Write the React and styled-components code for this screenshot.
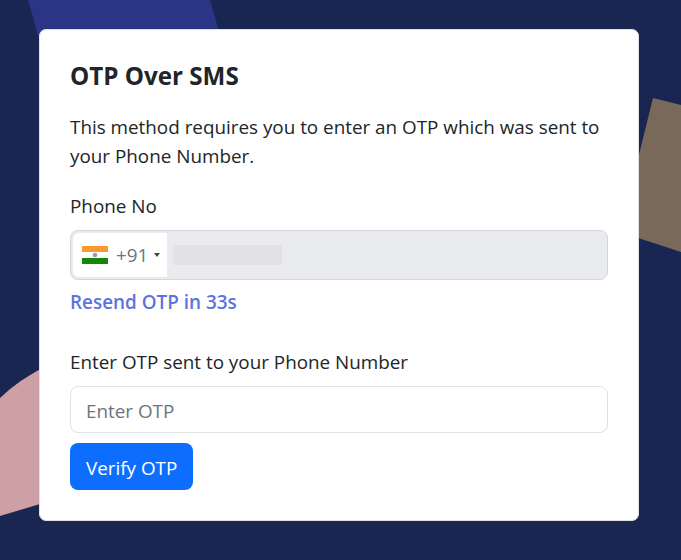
import styled, { createGlobalStyle } from "styled-components";

const GlobalStyle = createGlobalStyle`
  html, body {
    margin: 0;
    padding: 0;
    height: 100%;
    background: #1a2652;
  }
  * {
    box-sizing: border-box;
  }
`;

const Page = styled.main`
  position: relative;
  width: 100%;
  height: 560px;
  overflow: hidden;
  padding-top: 29px;
  background: #1a2652;
  font-family: "Open Sans", "Noto Sans", sans-serif;
  color: #212529;
`;

const Backdrop = styled.svg`
  position: absolute;
  left: 0;
  top: 0;
`;

const Card = styled.section`
  position: relative;
  width: 600px;
  height: 492px;
  margin-left: 39px;
  padding: 28px 30px;
  background: #fff;
  border: 1px solid #dee2e6;
  border-radius: 7px;
`;

const Title = styled.h1`
  margin: 0 0 19px;
  font-size: 24.2px;
  line-height: 36px;
  font-weight: 700;
`;

const Text = styled.p`
  margin: 0 0 21px;
  font-size: 18.85px;
  line-height: 29px;
`;

const Label = styled.label`
  display: block;
  margin-bottom: 9px;
  font-size: 18.85px;
  line-height: 29px;
`;

const PhoneBox = styled.div`
  display: flex;
  align-items: stretch;
  height: 50px;
  padding: 2px;
  background: #e9ebef;
  border: 1px solid #d3d5d8;
  border-radius: 8px;
`;

const CountryPicker = styled.div`
  display: flex;
  align-items: center;
  width: 94px;
  padding-left: 9px;
  background: #fff;
  border-radius: 6px 0 0 6px;
  color: #6c757d;
  font-size: 18.85px;
`;

const Flag = styled.svg`
  margin-right: 8px;
`;

const Caret = styled.span`
  width: 0;
  height: 0;
  margin-left: 6px;
  border-left: 3px solid transparent;
  border-right: 3px solid transparent;
  border-top: 4px solid #444;
`;

const MaskedNumber = styled.div`
  align-self: center;
  width: 109px;
  height: 20px;
  margin-left: 6px;
  background: #e2e2e4;
`;

const Resend = styled.div`
  margin: 8px 0 31px;
  color: #5b74dc;
  font-size: 18.9px;
  line-height: 29px;
  font-weight: 600;
`;

const OtpInput = styled.input`
  display: block;
  width: 100%;
  height: 47px;
  padding: 2px 15px 0;
  margin-bottom: 10px;
  border: 1px solid #dee2e6;
  border-radius: 8px;
  font-family: inherit;
  font-size: 18.85px;
  outline: none;
  &::placeholder {
    color: #6c757d;
    opacity: 1;
  }
`;

const VerifyButton = styled.button`
  display: block;
  height: 47px;
  padding: 2px 16px 0;
  border: 0;
  border-radius: 8px;
  background: #0d6efd;
  color: #fff;
  font-family: inherit;
  font-size: 18.85px;
`;

const App = () => (
  <>
    <GlobalStyle />
    <Page>
      <Backdrop width="681" height="560" viewBox="0 0 681 560">
        <path d="M28 0 L210 0 L222 42 L42 50 Z" fill="#2b3585" />
        <path d="M653 98 L681 105 L681 252 L620 232 Z" fill="#79695a" />
        <path d="M0 398 Q18 380 50 364 L60 498 L0 516 Z" fill="#cda0a5" />
      </Backdrop>
      <Card>
        <Title>OTP Over SMS</Title>
        <Text>
          This method requires you to enter an OTP which was sent to your Phone
          Number.
        </Text>
        <Label>Phone No</Label>
        <PhoneBox>
          <CountryPicker>
            <Flag width="26" height="18" viewBox="0 0 26 18">
              <rect width="26" height="6" fill="#f79a32" />
              <rect y="6" width="26" height="6" fill="#fff" />
              <rect y="12" width="26" height="6" fill="#138808" />
              <circle cx="13" cy="9" r="2.3" fill="#9a9ab8" />
            </Flag>
            +91
            <Caret />
          </CountryPicker>
          <MaskedNumber />
        </PhoneBox>
        <Resend>Resend OTP in 33s</Resend>
        <Label>Enter OTP sent to your Phone Number</Label>
        <OtpInput placeholder="Enter OTP" />
        <VerifyButton>Verify OTP</VerifyButton>
      </Card>
    </Page>
  </>
);

export default App;
